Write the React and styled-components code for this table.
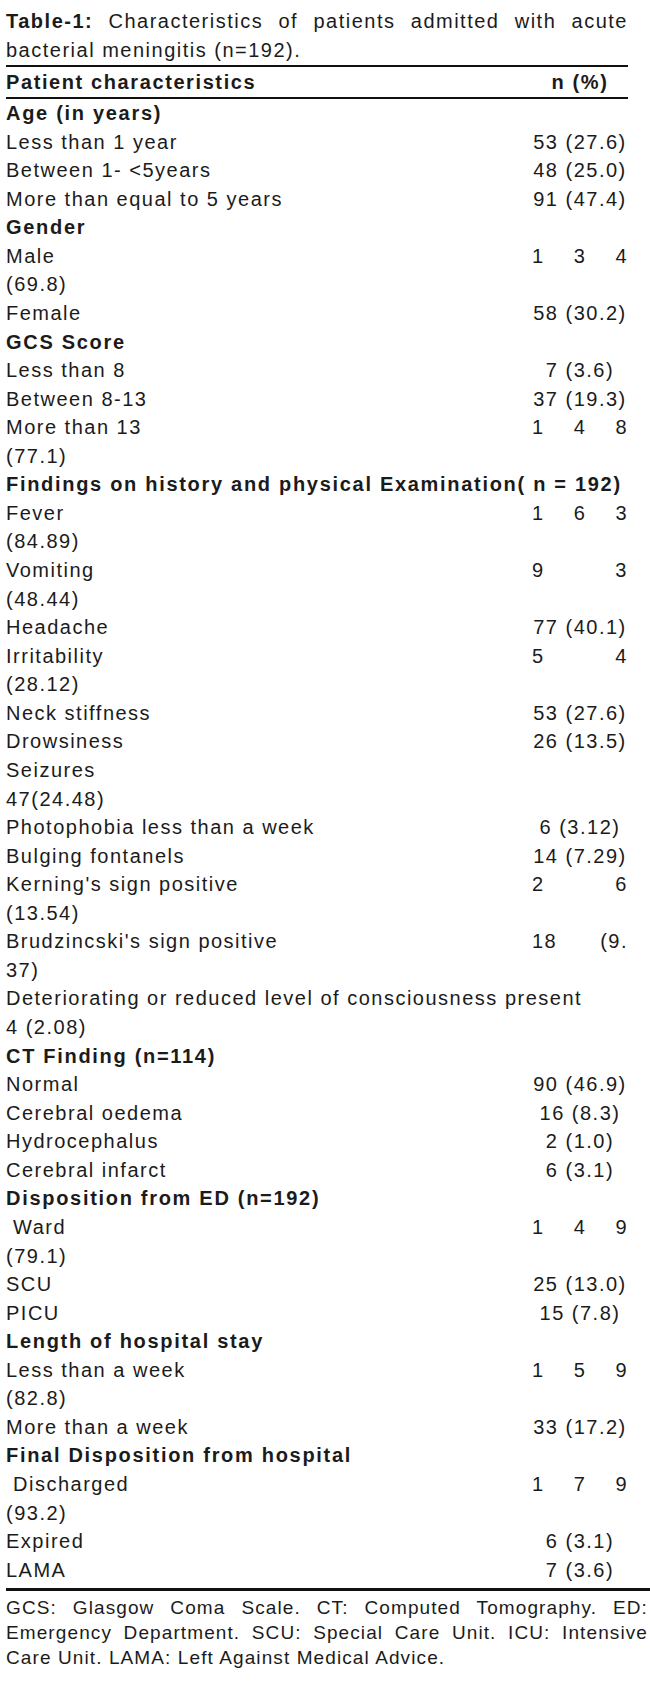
import React from "react";
import styled, { createGlobalStyle } from "styled-components";

const GlobalStyle = createGlobalStyle`
  html, body {
    margin: 0;
    padding: 0;
    background: #ffffff;
  }
  body {
    font-family: "Liberation Sans", Arial, sans-serif;
    color: #1b1b1b;
  }
  * { box-sizing: border-box; }
`;

const Page = styled.div`
  width: 650px;
  padding: 7px 22px 0 6px;
`;

const Caption = styled.div`
  font-size: 20px;
  letter-spacing: 1.5px;
  line-height: 29px;
`;

const CaptionLine = styled.div`
  text-align: ${(p) => (p.$justify ? "justify" : "left")};
  text-align-last: ${(p) => (p.$justify ? "justify" : "left")};
`;

const Strong = styled.b`
  font-weight: 700;
`;

const Table = styled.div`
  display: flex;
  flex-direction: column;
`;

const HeaderRow = styled.div`
  display: grid;
  grid-template-columns: 1fr 96px;
  border-top: 2px solid #111;
  border-bottom: 2px solid #111;
  height: 34px;
  line-height: 30px;
  font-size: 20px;
  font-weight: 700;
  letter-spacing: 1.6px;
`;

const HeaderCell = styled.div`
  text-align: ${(p) => (p.$center ? "center" : "left")};
  white-space: nowrap;
`;

const Row = styled.div`
  display: grid;
  grid-template-columns: 1fr 96px;
  height: 28.57px;
  line-height: 28.57px;
  font-size: 20px;
  letter-spacing: 1.5px;
`;

const Label = styled.div`
  grid-column: ${(p) => (p.$full ? "1 / -1" : "1 / 2")};
  font-weight: ${(p) => (p.$bold ? 700 : 400)};
  letter-spacing: ${(p) => (p.$bold ? "1.7px" : "1.5px")};
  white-space: pre;
  overflow: visible;
`;

const Value = styled.div`
  grid-column: 2 / 3;
  white-space: ${(p) => (p.$spread ? "normal" : "nowrap")};
  text-align: ${(p) => (p.$spread ? "justify" : "center")};
  text-align-last: ${(p) => (p.$spread ? "justify" : "center")};
`;

const BottomRule = styled.div`
  margin-top: 4px;
  margin-right: -22px;
  border-top: 3px solid #111;
`;

const Footnote = styled.div`
  margin-top: 4px;
  margin-right: -20px;
  font-size: 19px;
  letter-spacing: 1.1px;
  line-height: 25px;
`;

const FootLine = styled.div`
  text-align: ${(p) => (p.$justify ? "justify" : "left")};
  text-align-last: ${(p) => (p.$justify ? "justify" : "left")};
`;

// t: s = section (bold), i = item (label + value), c = continuation text, f = full-width regular
const rows = [
  { t: "s", l: "Age (in years)" },
  { t: "i", l: "Less than 1 year", v: "53 (27.6)" },
  { t: "i", l: "Between 1- <5years", v: "48 (25.0)" },
  { t: "i", l: "More than equal to 5 years", v: "91 (47.4)" },
  { t: "s", l: "Gender" },
  { t: "i", l: "Male", v: "1 3 4", sp: true },
  { t: "c", l: "(69.8)" },
  { t: "i", l: "Female", v: "58 (30.2)" },
  { t: "s", l: "GCS Score" },
  { t: "i", l: "Less than 8", v: "7 (3.6)" },
  { t: "i", l: "Between 8-13", v: "37 (19.3)" },
  { t: "i", l: "More than 13", v: "1 4 8", sp: true },
  { t: "c", l: "(77.1)" },
  { t: "s", l: "Findings on history and physical Examination( n = 192)", full: true },
  { t: "i", l: "Fever", v: "1 6 3", sp: true },
  { t: "c", l: "(84.89)" },
  { t: "i", l: "Vomiting", v: "9 3", sp: true },
  { t: "c", l: "(48.44)" },
  { t: "i", l: "Headache", v: "77 (40.1)" },
  { t: "i", l: "Irritability", v: "5 4", sp: true },
  { t: "c", l: "(28.12)" },
  { t: "i", l: "Neck stiffness", v: "53 (27.6)" },
  { t: "i", l: "Drowsiness", v: "26 (13.5)" },
  { t: "c", l: "Seizures" },
  { t: "c", l: "47(24.48)" },
  { t: "i", l: "Photophobia less than a week", v: "6 (3.12)" },
  { t: "i", l: "Bulging fontanels", v: "14 (7.29)" },
  { t: "i", l: "Kerning's sign positive", v: "2 6", sp: true },
  { t: "c", l: "(13.54)" },
  { t: "i", l: "Brudzincski's sign positive", v: "18 (9.", sp: true },
  { t: "c", l: "37)" },
  { t: "f", l: "Deteriorating or reduced level of consciousness present" },
  { t: "c", l: "4 (2.08)" },
  { t: "s", l: "CT Finding (n=114)" },
  { t: "i", l: "Normal", v: "90 (46.9)" },
  { t: "i", l: "Cerebral oedema", v: "16 (8.3)" },
  { t: "i", l: "Hydrocephalus", v: "2 (1.0)" },
  { t: "i", l: "Cerebral infarct", v: "6 (3.1)" },
  { t: "s", l: "Disposition from ED (n=192)" },
  { t: "i", l: "\u00a0Ward", v: "1 4 9", sp: true },
  { t: "c", l: "(79.1)" },
  { t: "i", l: "SCU", v: "25 (13.0)" },
  { t: "i", l: "PICU", v: "15 (7.8)" },
  { t: "s", l: "Length of hospital stay" },
  { t: "i", l: "Less than a week", v: "1 5 9", sp: true },
  { t: "c", l: "(82.8)" },
  { t: "i", l: "More than a week", v: "33 (17.2)" },
  { t: "s", l: "Final Disposition from hospital" },
  { t: "i", l: "\u00a0Discharged", v: "1 7 9", sp: true },
  { t: "c", l: "(93.2)" },
  { t: "i", l: "Expired", v: "6 (3.1)" },
  { t: "i", l: "LAMA", v: "7 (3.6)" },
];

export default function App() {
  return (
    <>
      <GlobalStyle />
      <Page>
        <Caption>
          <CaptionLine $justify>
            <Strong>Table-1:</Strong> Characteristics of patients admitted with acute
          </CaptionLine>
          <CaptionLine>bacterial meningitis (n=192).</CaptionLine>
        </Caption>
        <Table>
          <HeaderRow>
            <HeaderCell>Patient characteristics</HeaderCell>
            <HeaderCell $center>n (%)</HeaderCell>
          </HeaderRow>
          {rows.map((r, i) => (
            <Row key={i}>
              <Label
                $bold={r.t === "s"}
                $full={r.full || r.t === "f"}
              >
                {r.l}
              </Label>
              {r.t === "i" && <Value $spread={r.sp}>{r.v}</Value>}
            </Row>
          ))}
        </Table>
        <BottomRule />
        <Footnote>
          <FootLine $justify>
            GCS: Glasgow Coma Scale. CT: Computed Tomography. ED:
          </FootLine>
          <FootLine $justify>
            Emergency Department. SCU: Special Care Unit. ICU: Intensive
          </FootLine>
          <FootLine>Care Unit. LAMA: Left Against Medical Advice.</FootLine>
        </Footnote>
      </Page>
    </>
  );
}
